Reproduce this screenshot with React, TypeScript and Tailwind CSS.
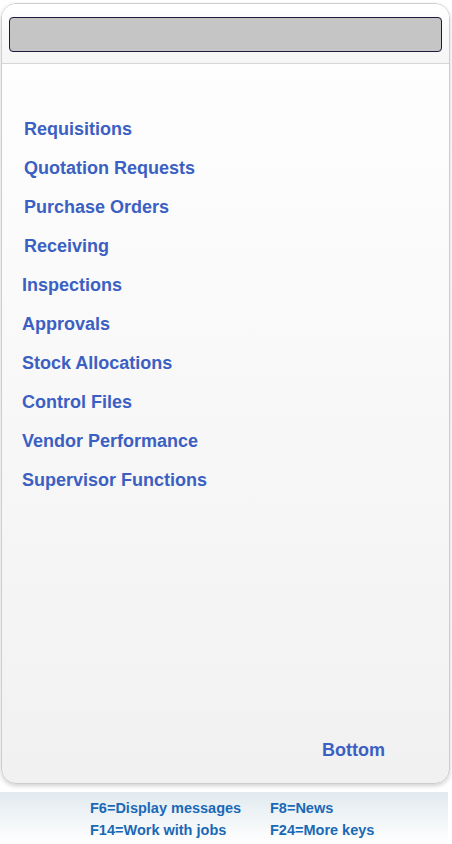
const menuItems = [
  { label: 'Requisitions', indent: 'pl-[22px]' },
  { label: 'Quotation Requests', indent: 'pl-[22px]' },
  { label: 'Purchase Orders', indent: 'pl-[22px]' },
  { label: 'Receiving', indent: 'pl-[22px]' },
  { label: 'Inspections', indent: 'pl-[20px]' },
  { label: 'Approvals', indent: 'pl-[20px]' },
  { label: 'Stock Allocations', indent: 'pl-[20px]' },
  { label: 'Control Files', indent: 'pl-[20px]' },
  { label: 'Vendor Performance', indent: 'pl-[20px]' },
  { label: 'Supervisor Functions', indent: 'pl-[20px]' },
]

const fkeys = ['F6=Display messages', 'F8=News', 'F14=Work with jobs', 'F24=More keys']

export default function App() {
  return (
    <div className="w-[452px] h-[844px] bg-white flex flex-col font-['Liberation_Sans',Arial,sans-serif]">
      {/* main panel */}
      <div className="mx-[1px] mt-[3px] h-[781px] w-[449px] rounded-[15px] border border-[#cdcdcd] shadow-[0_2px_4px_rgba(0,0,0,0.18)] overflow-hidden flex flex-col bg-gradient-to-b from-white to-[#f1f1f1]">
        <div className="h-[60px] shrink-0 border-b border-[#d6d6d6] px-[7px] pt-[13px] bg-gradient-to-b from-white to-[#f5f5f5]">
          <div className="h-[35px] rounded-[4px] border border-[#1d1b3d] bg-[#c5c5c5]" />
        </div>

        <div className="flex-1 flex flex-col pt-[46px]">
          {menuItems.map((item) => (
            <div
              key={item.label}
              className={`h-[39px] flex items-center ${item.indent} text-[18px] font-bold text-[#3b5fc2] cursor-pointer`}
            >
              {item.label}
            </div>
          ))}
          <div className="flex-1" />
          <div className="h-[39px] mb-[13px] flex items-center pl-[320px] text-[18px] font-bold text-[#3b5fc2]">
            Bottom
          </div>
        </div>
      </div>

      {/* function keys */}
      <div className="mt-[8px] w-[448px] flex-1 bg-gradient-to-b from-[#e1eaef] to-white pt-[5px] pl-[90px]">
        <div className="grid grid-cols-[180px_auto] text-[14.5px] leading-[22px] font-bold text-[#1a69b6]">
          {fkeys.map((k) => (
            <div key={k}>{k}</div>
          ))}
        </div>
      </div>
    </div>
  )
}
